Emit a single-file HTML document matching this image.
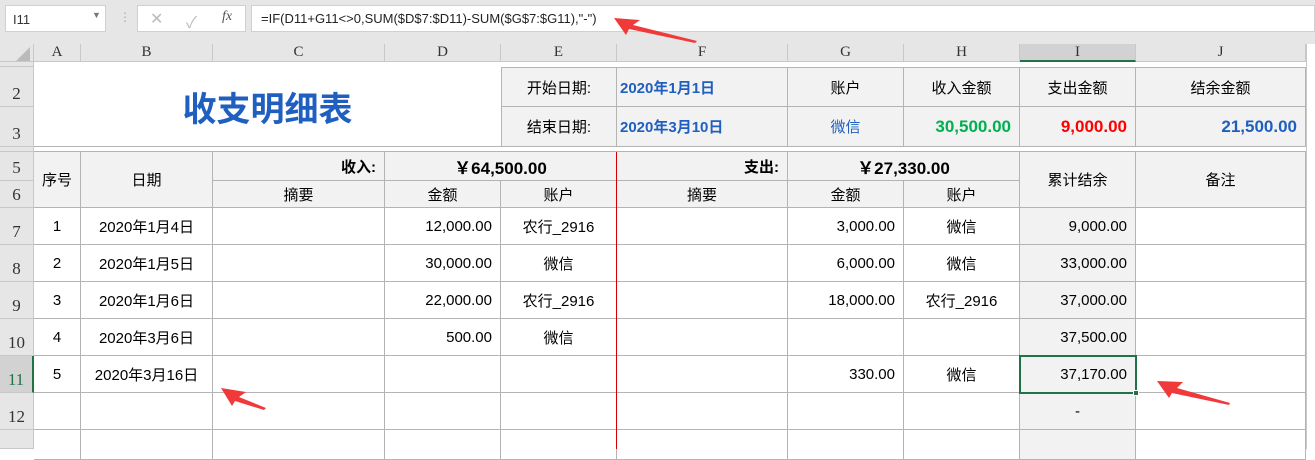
<!DOCTYPE html>
<html><head><meta charset="utf-8"><style>
*{margin:0;padding:0;box-sizing:border-box}
body{width:1315px;height:449px;overflow:hidden;background:#fff;position:relative;font-family:"Liberation Sans","Noto Sans CJK SC",sans-serif;font-size:15px;color:#000}
.a{position:absolute}
.c{position:absolute;display:flex;align-items:center;justify-content:center;border-right:1px solid #b4b4b4;border-bottom:1px solid #b4b4b4;white-space:nowrap}
.r{justify-content:flex-end;padding-right:8px}
.g{background:#f2f2f2}
.hd{position:absolute;background:#e6e6e6;border-right:1px solid #c8c8c8;border-bottom:1px solid #c8c8c8;display:flex;align-items:center;justify-content:center;font-family:"Liberation Serif",serif;font-size:15px;color:#333}
.rh{position:absolute;left:0;width:34px;background:#e6e6e6;border-right:1px solid #c8c8c8;border-bottom:1px solid #c8c8c8;display:flex;align-items:flex-end;justify-content:center;font-family:"Liberation Serif",serif;font-size:17px;color:#333;padding-bottom:2px;overflow:hidden}
.b{font-weight:bold}
.bl{color:#1f5fbf}
</style></head><body>
<div class="a" style="left:0;top:0;width:1315px;height:44px;background:#e6e6e6"></div>
<div class="a" style="left:5px;top:5px;width:101px;height:27px;background:#fff;border:1px solid #d0d0d0;font-size:13px;padding:6px 0 0 7px;color:#333">I11<span style="position:absolute;left:86px;top:4px;font-size:9px;color:#777">▼</span></div>
<div class="a" style="left:119px;top:10px;color:#aaa;font-size:12px">⋮</div>
<div class="a" style="left:137px;top:5px;width:109px;height:27px;background:#fff;border:1px solid #d0d0d0;color:#bbb;font-size:16px"><span class="a" style="left:12px;top:3px">✕</span><span class="a" style="left:48px;top:3px">✓</span><span class="a" style="left:84px;top:3px;font-family:'Liberation Serif',serif;font-style:italic;color:#555;font-size:14px">fx</span></div>
<div class="a" style="left:251px;top:5px;width:1064px;height:27px;background:#fff;border:1px solid #d0d0d0;font-size:13px;padding:5px 0 0 9px;color:#222">=IF(D11+G11&lt;&gt;0,SUM($D$7:$D11)-SUM($G$7:$G11),"-")</div>

<div class="hd" style="left:0;top:44px;width:34px;height:18px"><svg width="14" height="14" style="margin-left:12px;margin-top:2px"><polygon points="14,0 14,14 0,14" fill="#bbb"/></svg></div>
<div class="hd" style="left:34px;top:44px;width:47px;height:18px">A</div>
<div class="hd" style="left:81px;top:44px;width:132px;height:18px">B</div>
<div class="hd" style="left:213px;top:44px;width:172px;height:18px">C</div>
<div class="hd" style="left:385px;top:44px;width:116px;height:18px">D</div>
<div class="hd" style="left:501px;top:44px;width:116px;height:18px">E</div>
<div class="hd" style="left:617px;top:44px;width:171px;height:18px">F</div>
<div class="hd" style="left:788px;top:44px;width:116px;height:18px">G</div>
<div class="hd" style="left:904px;top:44px;width:116px;height:18px">H</div>
<div class="hd" style="left:1020px;top:44px;width:116px;height:18px;background:#d2d2d2;border-bottom:2px solid #217346">I</div>
<div class="hd" style="left:1136px;top:44px;width:170px;height:18px">J</div>
<div class="a" style="left:1306px;top:44px;width:9px;height:405px;background:#fff;border-left:1px solid #c8c8c8"></div>

<div class="rh" style="top:62px;height:5px"></div>
<div class="rh" style="top:67px;height:40px">2</div>
<div class="rh" style="top:107px;height:40px">3</div>
<div class="rh" style="top:147px;height:5px"></div>
<div class="rh" style="top:152px;height:29px">5</div>
<div class="rh" style="top:181px;height:27px">6</div>
<div class="rh" style="top:208px;height:37px">7</div>
<div class="rh" style="top:245px;height:37px">8</div>
<div class="rh" style="top:282px;height:37px">9</div>
<div class="rh" style="top:319px;height:37px">10</div>
<div class="rh" style="top:356px;height:37px;background:#d2d2d2;color:#217346;border-right:2px solid #217346">11</div>
<div class="rh" style="top:393px;height:37px">12</div>
<div class="rh" style="top:430px;height:19px"></div>

<div class="a b" style="left:34px;top:67px;width:467px;height:80px;display:flex;align-items:center;justify-content:center;font-size:34px;color:#1f5fbf;border-bottom:1px solid #b4b4b4">收支明细表</div>
<div class="a" style="left:34px;top:147px;width:1272px;height:5px;border-bottom:1px solid #b4b4b4"></div>

<div class="c g" style="left:501px;top:67px;width:116px;height:40px;border-left:1px solid #b4b4b4;border-top:1px solid #b4b4b4">开始日期:</div>
<div class="c g" style="left:501px;top:107px;width:116px;height:40px;border-left:1px solid #b4b4b4">结束日期:</div>
<div class="c g b bl" style="left:617px;top:67px;width:171px;height:40px;justify-content:flex-start;padding-left:3px;font-size:15px;border-top:1px solid #b4b4b4">2020年1月1日</div>
<div class="c g b bl" style="left:617px;top:107px;width:171px;height:40px;justify-content:flex-start;padding-left:3px;font-size:15px">2020年3月10日</div>
<div class="c g" style="left:788px;top:67px;width:116px;height:40px;border-top:1px solid #b4b4b4">账户</div>
<div class="c g bl" style="left:788px;top:107px;width:116px;height:40px">微信</div>
<div class="c g" style="left:904px;top:67px;width:116px;height:40px;border-top:1px solid #b4b4b4">收入金额</div>
<div class="c g b r" style="left:904px;top:107px;width:116px;height:40px;color:#00b050;font-size:17px">30,500.00</div>
<div class="c g" style="left:1020px;top:67px;width:116px;height:40px;border-top:1px solid #b4b4b4">支出金额</div>
<div class="c g b r" style="left:1020px;top:107px;width:116px;height:40px;color:#ff0000;font-size:17px">9,000.00</div>
<div class="c g" style="left:1136px;top:67px;width:170px;height:40px;border-top:1px solid #b4b4b4">结余金额</div>
<div class="c g b r" style="left:1136px;top:107px;width:170px;height:40px;color:#1f5fbf;font-size:17px">21,500.00</div>

<div class="c g" style="left:34px;top:152px;width:47px;height:56px">序号</div>
<div class="c g" style="left:81px;top:152px;width:132px;height:56px">日期</div>
<div class="c g b r" style="left:213px;top:152px;width:172px;height:29px">收入:</div>
<div class="c g b" style="left:385px;top:152px;width:232px;height:29px;font-size:17px">￥64,500.00</div>
<div class="c g b r" style="left:617px;top:152px;width:171px;height:29px">支出:</div>
<div class="c g b" style="left:788px;top:152px;width:232px;height:29px;font-size:17px">￥27,330.00</div>
<div class="c g" style="left:213px;top:181px;width:172px;height:27px">摘要</div>
<div class="c g" style="left:385px;top:181px;width:116px;height:27px">金额</div>
<div class="c g" style="left:501px;top:181px;width:116px;height:27px">账户</div>
<div class="c g" style="left:617px;top:181px;width:171px;height:27px">摘要</div>
<div class="c g" style="left:788px;top:181px;width:116px;height:27px">金额</div>
<div class="c g" style="left:904px;top:181px;width:116px;height:27px">账户</div>
<div class="c g" style="left:1020px;top:152px;width:116px;height:56px">累计结余</div>
<div class="c g" style="left:1136px;top:152px;width:170px;height:56px">备注</div>

<div class="c" style="left:34px;top:208px;width:47px;height:37px">1</div><div class="c" style="left:81px;top:208px;width:132px;height:37px">2020年1月4日</div><div class="c" style="left:213px;top:208px;width:172px;height:37px"></div><div class="c r" style="left:385px;top:208px;width:116px;height:37px">12,000.00</div><div class="c" style="left:501px;top:208px;width:116px;height:37px">农行_2916</div><div class="c" style="left:617px;top:208px;width:171px;height:37px"></div><div class="c r" style="left:788px;top:208px;width:116px;height:37px">3,000.00</div><div class="c" style="left:904px;top:208px;width:116px;height:37px">微信</div><div class="c g r" style="left:1020px;top:208px;width:116px;height:37px">9,000.00</div><div class="c" style="left:1136px;top:208px;width:170px;height:37px"></div>
<div class="c" style="left:34px;top:245px;width:47px;height:37px">2</div><div class="c" style="left:81px;top:245px;width:132px;height:37px">2020年1月5日</div><div class="c" style="left:213px;top:245px;width:172px;height:37px"></div><div class="c r" style="left:385px;top:245px;width:116px;height:37px">30,000.00</div><div class="c" style="left:501px;top:245px;width:116px;height:37px">微信</div><div class="c" style="left:617px;top:245px;width:171px;height:37px"></div><div class="c r" style="left:788px;top:245px;width:116px;height:37px">6,000.00</div><div class="c" style="left:904px;top:245px;width:116px;height:37px">微信</div><div class="c g r" style="left:1020px;top:245px;width:116px;height:37px">33,000.00</div><div class="c" style="left:1136px;top:245px;width:170px;height:37px"></div>
<div class="c" style="left:34px;top:282px;width:47px;height:37px">3</div><div class="c" style="left:81px;top:282px;width:132px;height:37px">2020年1月6日</div><div class="c" style="left:213px;top:282px;width:172px;height:37px"></div><div class="c r" style="left:385px;top:282px;width:116px;height:37px">22,000.00</div><div class="c" style="left:501px;top:282px;width:116px;height:37px">农行_2916</div><div class="c" style="left:617px;top:282px;width:171px;height:37px"></div><div class="c r" style="left:788px;top:282px;width:116px;height:37px">18,000.00</div><div class="c" style="left:904px;top:282px;width:116px;height:37px">农行_2916</div><div class="c g r" style="left:1020px;top:282px;width:116px;height:37px">37,000.00</div><div class="c" style="left:1136px;top:282px;width:170px;height:37px"></div>
<div class="c" style="left:34px;top:319px;width:47px;height:37px">4</div><div class="c" style="left:81px;top:319px;width:132px;height:37px">2020年3月6日</div><div class="c" style="left:213px;top:319px;width:172px;height:37px"></div><div class="c r" style="left:385px;top:319px;width:116px;height:37px">500.00</div><div class="c" style="left:501px;top:319px;width:116px;height:37px">微信</div><div class="c" style="left:617px;top:319px;width:171px;height:37px"></div><div class="c r" style="left:788px;top:319px;width:116px;height:37px"></div><div class="c" style="left:904px;top:319px;width:116px;height:37px"></div><div class="c g r" style="left:1020px;top:319px;width:116px;height:37px">37,500.00</div><div class="c" style="left:1136px;top:319px;width:170px;height:37px"></div>
<div class="c" style="left:34px;top:356px;width:47px;height:37px">5</div><div class="c" style="left:81px;top:356px;width:132px;height:37px">2020年3月16日</div><div class="c" style="left:213px;top:356px;width:172px;height:37px"></div><div class="c r" style="left:385px;top:356px;width:116px;height:37px"></div><div class="c" style="left:501px;top:356px;width:116px;height:37px"></div><div class="c" style="left:617px;top:356px;width:171px;height:37px"></div><div class="c r" style="left:788px;top:356px;width:116px;height:37px">330.00</div><div class="c" style="left:904px;top:356px;width:116px;height:37px">微信</div><div class="c g r" style="left:1020px;top:356px;width:116px;height:37px">37,170.00</div><div class="c" style="left:1136px;top:356px;width:170px;height:37px"></div>
<div class="c" style="left:34px;top:393px;width:47px;height:37px"></div><div class="c" style="left:81px;top:393px;width:132px;height:37px"></div><div class="c" style="left:213px;top:393px;width:172px;height:37px"></div><div class="c" style="left:385px;top:393px;width:116px;height:37px"></div><div class="c" style="left:501px;top:393px;width:116px;height:37px"></div><div class="c" style="left:617px;top:393px;width:171px;height:37px"></div><div class="c" style="left:788px;top:393px;width:116px;height:37px"></div><div class="c" style="left:904px;top:393px;width:116px;height:37px"></div><div class="c g" style="left:1020px;top:393px;width:116px;height:37px">-</div><div class="c" style="left:1136px;top:393px;width:170px;height:37px"></div>
<div class="c" style="left:34px;top:430px;width:47px;height:30px"></div><div class="c" style="left:81px;top:430px;width:132px;height:30px"></div><div class="c" style="left:213px;top:430px;width:172px;height:30px"></div><div class="c" style="left:385px;top:430px;width:116px;height:30px"></div><div class="c" style="left:501px;top:430px;width:116px;height:30px"></div><div class="c" style="left:617px;top:430px;width:171px;height:30px"></div><div class="c" style="left:788px;top:430px;width:116px;height:30px"></div><div class="c" style="left:904px;top:430px;width:116px;height:30px"></div><div class="c g" style="left:1020px;top:430px;width:116px;height:30px"></div><div class="c" style="left:1136px;top:430px;width:170px;height:30px"></div>

<div class="a" style="left:616px;top:152px;width:1px;height:297px;background:#d00000"></div>
<div class="a" style="left:1019px;top:355px;width:118px;height:39px;border:2px solid #217346"></div>
<div class="a" style="left:1133px;top:390px;width:6px;height:6px;background:#217346;border:1px solid #fff"></div>

<svg class="a" style="left:0;top:0" width="1315" height="449">
<g fill="#f03a3a">
<polygon points="614,18 640,20 633,25 697,41 695,43 629,29 626,35"/>
<polygon points="221,388 246,392 239,397 266,408 264,410 235,401 232,406"/>
<polygon points="1157,381 1183,382 1177,388 1230,403 1229,405 1172,393 1169,398"/>
</g>
</svg>
</body></html>
